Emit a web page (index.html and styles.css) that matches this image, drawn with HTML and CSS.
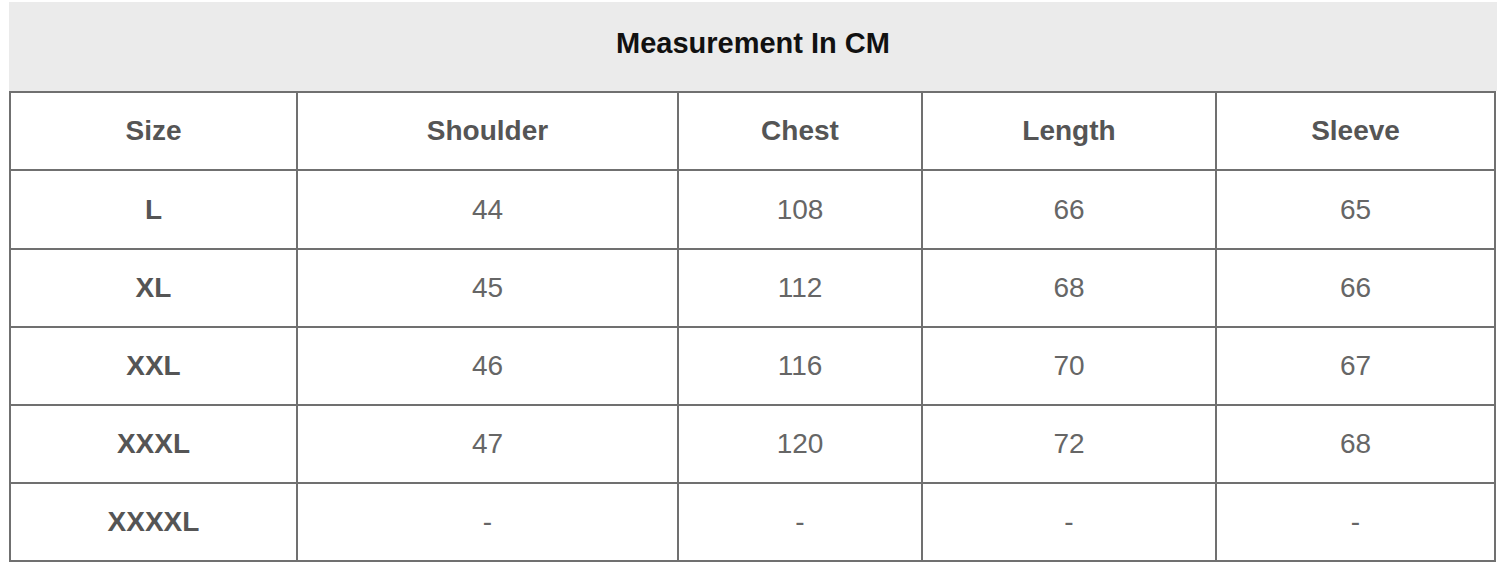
FILE: index.html
```html
<!DOCTYPE html>
<html>
<head>
<meta charset="utf-8">
<link rel="stylesheet" href="styles.css">
</head>
<body>
<div class="chart">
  <div class="title">Measurement In CM</div>
  <table class="sizes">
    <colgroup>
      <col class="c1"><col class="c2"><col class="c3"><col class="c4"><col class="c5">
    </colgroup>
    <tr class="head r1"><th>Size</th><th>Shoulder</th><th>Chest</th><th>Length</th><th>Sleeve</th></tr>
    <tr class="r2"><th>L</th><td>44</td><td>108</td><td>66</td><td>65</td></tr>
    <tr><th>XL</th><td>45</td><td>112</td><td>68</td><td>66</td></tr>
    <tr><th>XXL</th><td>46</td><td>116</td><td>70</td><td>67</td></tr>
    <tr><th>XXXL</th><td>47</td><td>120</td><td>72</td><td>68</td></tr>
    <tr><th>XXXXL</th><td>-</td><td>-</td><td>-</td><td>-</td></tr>
  </table>
</div>
</body>
</html>
```
FILE: styles.css
```css
html, body {
  margin: 0;
  padding: 0;
  background: #ffffff;
}
body {
  font-family: "Liberation Sans", Arial, sans-serif;
}
.chart {
  margin: 2px 0 0 9px;
  width: 1488px;
}
.title {
  height: 83px;
  padding-bottom: 6px;
  background: #ebebeb;
  display: flex;
  align-items: center;
  justify-content: center;
  font-size: 29px;
  font-weight: bold;
  color: #111111;
}
.sizes {
  border-collapse: separate;
  border-spacing: 2px;
  background: #707070;
  table-layout: fixed;
  width: 1487px;
}
.c1 { width: 285px; }
.c2 { width: 379px; }
.c3 { width: 242px; }
.c4 { width: 292px; }
.c5 { width: 277px; }
.sizes th, .sizes td {
  background: #ffffff;
  padding: 0;
  height: 76px;
  text-align: center;
  vertical-align: middle;
  font-size: 28px;
}
.sizes th {
  font-weight: bold;
  color: #555555;
}
.sizes td {
  font-weight: normal;
  color: #666666;
}
.sizes .r2 th, .sizes .r2 td {
  height: 77px;
}
```
